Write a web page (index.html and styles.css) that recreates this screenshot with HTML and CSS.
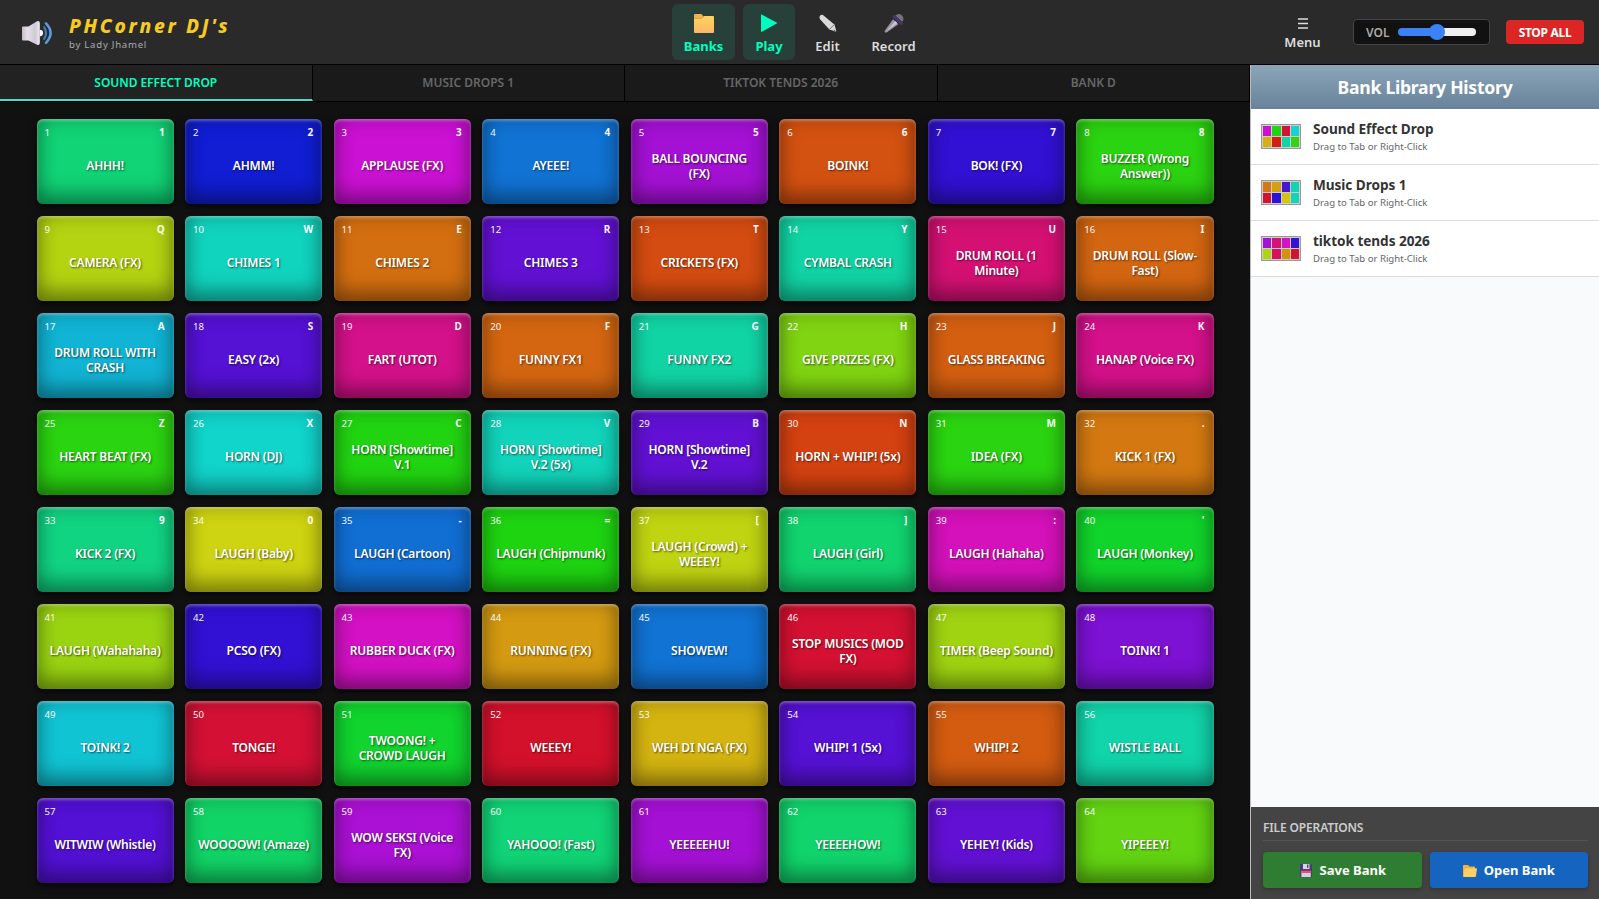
FILE: index.html
```html
<!DOCTYPE html>
<html lang="en">
<head>
<meta charset="utf-8">
<title>PHCorner DJ's</title>
<link rel="stylesheet" href="styles.css">
</head>
<body>
<header class="topbar">
  <div class="brand">
    <svg class="brand-icon" viewBox="0 0 32 28">
      <defs>
        <linearGradient id="spk" x1="0" x2="1"><stop offset="0" stop-color="#c4bec9"/><stop offset=".3" stop-color="#e4dfe8"/><stop offset=".75" stop-color="#cfc9d4"/><stop offset="1" stop-color="#f1edf4"/></linearGradient>
      </defs>
      <path d="M1 8.5Q1 7.5 2 7.5H7.5L16 2.3Q18.5 1.2 18.8 4V24Q18.5 26.8 16 25.7L7.5 21.6H2Q1 21.6 1 20.6Z" fill="url(#spk)"/>
      <path d="M18.8 10.8a3.3 3.3 0 0 1 0 6.6z" fill="#f7f4fa"/>
      <path d="M23.2 8.2q3.6 5.8 0 11.6" fill="none" stroke="#3d7fc0" stroke-width="2.1" stroke-linecap="round"/>
      <path d="M25 4.4q9.2 9.6 0 19.4" fill="none" stroke="#5b9be0" stroke-width="2.5" stroke-linecap="round"/>
    </svg>
    <div class="brand-text">
      <div class="brand-name">PHCorner DJ's</div>
      <div class="brand-by">by Lady Jhamel</div>
    </div>
  </div>
  <nav class="modes">
    <div class="mode mode-banks active">
      <svg class="mode-icon" viewBox="0 0 22 22"><defs><linearGradient id="fold" x1="0" y1="0" x2="0" y2="1"><stop offset="0" stop-color="#ffd35f"/><stop offset="1" stop-color="#ffb565"/></linearGradient></defs><path d="M1 3Q1 2 2 2H8.4L10.8 4.8 8.6 6H1z" fill="#f3b04a"/><path d="M1 6.2H8.6L11.4 4H20Q21 4 21 5V20Q21 21 20 21H2Q1 21 1 20Z" fill="url(#fold)"/></svg>
      <span>Banks</span>
    </div>
    <div class="mode mode-play active">
      <svg class="mode-icon" viewBox="0 0 22 22"><path d="M3 2.2 19.5 11 3 20.2z" fill="#00ffbf"/></svg>
      <span>Play</span>
    </div>
    <div class="mode mode-edit">
      <svg class="mode-icon" viewBox="0 0 22 22"><path d="M5.6 2.8 17.4 12.4 19.2 18.6Q19.4 19.8 18.2 19.4L12.4 17.4 2.8 7Q1.9 5 3.2 3.6 4.4 2.4 5.6 2.8z" fill="#d9d9d9"/><path d="M12.4 17.4 17.4 12.4" stroke="#777" stroke-width="1"/><path d="M17 17.6 19 19.5 16.4 18.6z" fill="#555"/></svg>
      <span>Edit</span>
    </div>
    <div class="mode mode-record">
      <svg class="mode-icon" viewBox="0 0 22 22"><path d="M10 7.2 15.4 12.2 3.6 20.4Q1.2 21.2 1.6 19z" fill="#9a95a0"/><path d="M12.2 9 14.4 11 3.4 19.6z" fill="#cbc7d0"/><path d="M12.4 3.6Q15.6.6 19 3.4 22 7 19 9.8z" fill="#777180"/><path d="M11.2 4.6 18.4 11.2" stroke="#44386b" stroke-width="3.2" stroke-linecap="round"/></svg>
      <span>Record</span>
    </div>
  </nav>
  <div class="controls">
    <div class="menu">
      <svg class="menu-icon" viewBox="0 0 10 11"><path d="M0 1h10M0 5.5h10M0 10h10" stroke="#ddd" stroke-width="1.6"/></svg>
      <span>Menu</span>
    </div>
    <div class="volume">
      <span class="volume-label">VOL</span>
      <div class="slider"><div class="slider-fill"></div><div class="slider-thumb"></div><div class="slider-rest"></div></div>
    </div>
    <button class="stop">STOP ALL</button>
  </div>
</header>
<div class="workspace">
  <main class="deck">
    <div class="tabs">
      <div class="tab active">SOUND EFFECT DROP</div>
      <div class="tab">MUSIC DROPS 1</div>
      <div class="tab">TIKTOK TENDS 2026</div>
      <div class="tab">BANK D</div>
    </div>
    <div class="pads" id="pads"></div>
  </main>
  <aside class="library">
    <h2 class="library-title">Bank Library History</h2>
    <div class="library-list" id="library"></div>
    <div class="files">
      <div class="files-title">FILE OPERATIONS</div>
      <div class="files-row">
        <button class="file-btn save">
          <svg class="file-icon" viewBox="0 0 14 16"><path d="M1 2h11l1 1v12H1z" fill="#4b3a73"/><path d="M4 2h6.5v5H4z" fill="#d9d3e6"/><path d="M8 2.6h1.4v3.2H8z" fill="#4b3a73"/><path d="M2.4 9h9.4v6H2.4z" fill="#d8cfe4"/><path d="M2.4 8.6h9.4v2.4H2.4z" fill="#ef4a78"/></svg>
          <span>Save Bank</span>
        </button>
        <button class="file-btn open">
          <svg class="file-icon" viewBox="0 0 14 16"><path d="M0 4Q0 3 1 3h4l1.6 1.6H11q1 0 1 1V15H1q-1 0-1-1z" fill="#f0b04a"/><path d="M1.6 7.2Q1.8 6.2 2.8 6.2H13q1 0 .9 1L13 14q-.2 1-1.2 1H.6z" fill="#ffcf62"/></svg>
          <span>Open Bank</span>
        </button>
      </div>
    </div>
  </aside>
</div>
<script src="app.js"></script>
</body>
</html>
```
FILE: styles.css
```css
* { box-sizing: border-box; }
body {
  margin: 0;
  width: 1599px;
  height: 899px;
  overflow: hidden;
  display: flex;
  flex-direction: column;
  background: #111;
  font-family: "Noto Sans", "Open Sans", sans-serif;
}
button { font-family: inherit; border: 0; padding: 0; }
svg { display: block; }

.topbar {
  height: 65px;
  flex: none;
  display: grid;
  grid-template-columns: 672px 1fr 327px;
  background: #2a2a2a;
  border-bottom: 1px solid #000;
}
.brand { display: flex; align-items: center; gap: 16px; padding: 2px 0 0 21px; }
.brand-icon { width: 32px; height: 28px; }
.brand-text { padding-bottom: 1px; }
.brand-name { font-size: 19.2px; line-height: 22px; font-weight: 800; font-style: italic; letter-spacing: 2.7px; color: #f9cb20; }
.brand-by { font-size: 9.6px; line-height: 13px; letter-spacing: .75px; color: #aaa; padding-top: 1px; }

.modes { display: flex; gap: 8px; padding-top: 4px; }
.mode {
  height: 56px;
  display: flex;
  flex-direction: column;
  align-items: center;
  padding-top: 8px;
  border-radius: 6px;
  font-size: 13px;
  line-height: 18px;
  font-weight: 600;
  color: #ddd;
}
.mode span { margin-top: 3px; }
.mode-icon { width: 22px; height: 22px; }
.mode-banks { width: 63px; }
.mode-play { width: 52px; }
.mode-edit { width: 49px; }
.mode-record { width: 67px; }
.mode.active { background: #28403a; color: #00ffbf; font-weight: 700; }

.controls { display: flex; align-items: center; }
.menu { width: 61px; display: flex; flex-direction: column; align-items: center; font-size: 13px; line-height: 18px; font-weight: 600; color: #ddd; padding-top: 5px; }
.menu-icon { width: 10px; height: 11px; margin-bottom: 4px; }
.volume {
  width: 137px;
  height: 26px;
  margin-left: 20px;
  display: flex;
  align-items: center;
  padding-left: 12px;
  background: #111;
  border: 1px solid #444;
  border-radius: 4px;
}
.volume-label { width: 32px; font-size: 12px; font-weight: 600; color: #aaa; }
.slider { display: flex; align-items: center; width: 78px; }
.slider-fill { flex: none; width: 35px; height: 8px; border-radius: 4px 0 0 4px; background: #3b82f6; }
.slider-thumb { flex: none; width: 16px; height: 16px; margin: 0 -4px; border-radius: 50%; background: #3b82f6; z-index: 1; }
.slider-rest { flex: 1; height: 8px; border-radius: 0 4px 4px 0; background: #efefef; }
.stop { width: 78px; height: 24px; margin-left: 16px; border-radius: 4px; background: #dc2626; color: #fff; font-size: 12px; font-weight: 700; letter-spacing: -.3px; }

.workspace { flex: 1; min-height: 0; display: flex; }
.deck { width: 1250px; background: #111; }
.tabs { display: grid; grid-template-columns: repeat(4, 1fr); height: 37px; background: #1a1a1a; border-bottom: 1px solid #000; }
.tab { display: flex; align-items: center; justify-content: center; border-right: 1px solid #000; font-size: 12px; font-weight: 600; color: #666; padding-bottom: 1px; }
.tab.active { background: #222; color: #00ffbf; border-bottom: 2px solid #5cd3c0; padding-bottom: 0; letter-spacing: -.05px; }

.pads { display: grid; grid-template-columns: repeat(8, 1fr); grid-auto-rows: 85px; gap: 12px 11.4px; padding: 17px 36.5px 0; }
.pad {
  display: grid;
  grid-template-columns: 1fr 1fr;
  grid-template-rows: 26px 1fr;
  border-radius: 6px;
  background: hsl(var(--hue), 85%, 45%);
  box-shadow: inset 0 2px 3px rgba(255, 255, 255, .3), inset 0 0 20px rgba(0, 0, 0, .2), inset 0 -10px 20px rgba(0, 0, 0, .35), 0 3px 6px rgba(0, 0, 0, .7);
  color: #fff;
}
.pad-num { padding: 7px 0 0 8px; font-size: 9.6px; line-height: 14px; opacity: .95; }
.pad-key { padding: 6px 9px 0 0; font-size: 10px; line-height: 14px; font-weight: 700; text-align: right; opacity: .95; }
.pad-label {
  grid-column: 1 / 3;
  display: flex;
  align-items: center;
  justify-content: center;
  padding: 0 10px 18px;
  font-size: 12px;
  line-height: 15px;
  font-weight: 600;
  letter-spacing: -.22px;
  text-align: center;
  text-shadow: 1px 1px 2px rgba(0, 0, 0, .6);
}
.pad-label span { white-space: pre; }

.library { flex: 1; display: flex; flex-direction: column; background: #f8fafc; border-left: 1px solid #bbb; }
.library-title { margin: 0; height: 44px; display: flex; align-items: center; justify-content: center; background: linear-gradient(#8ba6b8, #68829a); color: #fff; font-size: 17.6px; font-weight: 700; letter-spacing: -.25px; }
.library-list { flex: 1; }
.bank { height: 56px; display: flex; align-items: center; gap: 12px; padding-left: 10px; background: #fff; border-bottom: 1px solid #ddd; }
.thumb { width: 40px; height: 25px; display: grid; grid-template-columns: repeat(4, 1fr); grid-template-rows: 1fr 1fr; gap: 1px; padding: 1px; background: #ccc; border: 1px solid #999; }
.bank-name { font-size: 13.6px; line-height: 18px; font-weight: 700; letter-spacing: -.05px; color: #333; }
.bank-hint { font-size: 9.6px; line-height: 14px; padding-top: 2px; color: #666; }
.files { height: 92px; padding: 11px 11px 0 12px; background: #444; }
.files-title { height: 23px; border-bottom: 1px solid #555; font-size: 12px; line-height: 20px; font-weight: 600; letter-spacing: -.15px; color: #ccc; }
.files-row { display: grid; grid-template-columns: 1fr 1fr; gap: 8px; margin-top: 11px; }
.file-btn { height: 36px; display: flex; align-items: center; justify-content: center; gap: 7px; border-radius: 4px; color: #fff; font-size: 13px; font-weight: 700; box-shadow: 0 2px 4px rgba(0, 0, 0, .25); }
.file-icon { width: 14px; height: 16px; }
.save { background: #2e7d32; }
.open { background: #1565c0; }
```
FILE: app.js
```js
// Each pad: [label, shortcut key, hue]
const pads = [
  ["AHHH!", "1", 151], ["AHMM!", "2", 236], ["APPLAUSE (FX)", "3", 297], ["AYEEE!", "4", 210],
  ["BALL BOUNCING\n(FX)", "5", 285], ["BOINK!", "6", 20], ["BOK! (FX)", "7", 250], ["BUZZER (Wrong\nAnswer))", "8", 112],
  ["CAMERA (FX)", "Q", 70], ["CHIMES 1", "W", 173], ["CHIMES 2", "E", 29], ["CHIMES 3", "R", 265],
  ["CRICKETS (FX)", "T", 18], ["CYMBAL CRASH", "Y", 165], ["DRUM ROLL (1\nMinute)", "U", 330], ["DRUM ROLL (Slow-\nFast)", "I", 26],
  ["DRUM ROLL WITH\nCRASH", "A", 190], ["EASY (2x)", "S", 261], ["FART (UTOT)", "D", 323], ["FUNNY FX1", "F", 26],
  ["FUNNY FX2", "G", 165], ["GIVE PRIZES (FX)", "H", 86], ["GLASS BREAKING", "J", 24], ["HANAP (Voice FX)", "K", 323],
  ["HEART BEAT (FX)", "Z", 112], ["HORN (DJ)", "X", 177], ["HORN [Showtime]\nV.1", "C", 115], ["HORN [Showtime]\nV.2 (5x)", "V", 172],
  ["HORN [Showtime]\nV.2", "B", 265], ["HORN + WHIP! (5x)", "N", 15], ["IDEA (FX)", "M", 112], ["KICK 1 (FX)", ".", 32],
  ["KICK 2 (FX)", "9", 155], ["LAUGH (Baby)", "0", 62], ["LAUGH (Cartoon)", "-", 211], ["LAUGH (Chipmunk)", "=", 116],
  ["LAUGH (Crowd) +\nWEEEY!", "[", 66], ["LAUGH (Girl)", "]", 149], ["LAUGH (Hahaha)", ":", 308], ["LAUGH (Monkey)", "'", 128],
  ["LAUGH (Wahahaha)", "", 78], ["PCSO (FX)", "", 250], ["RUBBER DUCK (FX)", "", 305], ["RUNNING (FX)", "", 42],
  ["SHOWEW!", "", 210], ["STOP MUSICS (MOD\nFX)", "", 350], ["TIMER (Beep Sound)", "", 76], ["TOINK! 1", "", 273],
  ["TOINK! 2", "", 185], ["TONGE!", "", 349], ["TWOONG! +\nCROWD LAUGH", "", 129], ["WEEEY!", "", 352],
  ["WEH DI NGA (FX)", "", 50], ["WHIP! 1 (5x)", "", 261], ["WHIP! 2", "", 23], ["WISTLE BALL", "", 167],
  ["WITWIW (Whistle)", "", 260], ["WOOOOW! (Amaze)", "", 146], ["WOW SEKSI (Voice\nFX)", "", 287], ["YAHOOO! (Fast)", "", 151],
  ["YEEEEEHU!", "", 285], ["YEEEEHOW!", "", 148], ["YEHEY! (Kids)", "", 265], ["YIPEEEY!", "", 95]
];
document.getElementById("pads").innerHTML = pads.map(([label, key, hue], i) =>
  `<div class="pad" style="--hue:${hue}"><div class="pad-num">${i + 1}</div><div class="pad-key">${key}</div><div class="pad-label"><span>${label}</span></div></div>`
).join("");

const banks = [
  ["Sound Effect Drop", ["#c913d0", "#1fd413", "#d41337", "#13d4d1", "#d4b013", "#d42013", "#13d4a5", "#2fd413"]],
  ["Music Drops 1", ["#d47a13", "#d4a013", "#4b13d4", "#13d4b0", "#d41331", "#2c13d4", "#d4c413", "#13d4b5"]],
  ["tiktok tends 2026", ["#a513d4", "#d41375", "#d413c8", "#3413d4", "#b0d413", "#d4135c", "#d49013", "#d41330"]]
];
document.getElementById("library").innerHTML = banks.map(([name, colors]) =>
  `<div class="bank"><div class="thumb">${colors.map(c => `<i style="background:${c}"></i>`).join("")}</div><div><div class="bank-name">${name}</div><div class="bank-hint">Drag to Tab or Right-Click</div></div></div>`
).join("");
```
